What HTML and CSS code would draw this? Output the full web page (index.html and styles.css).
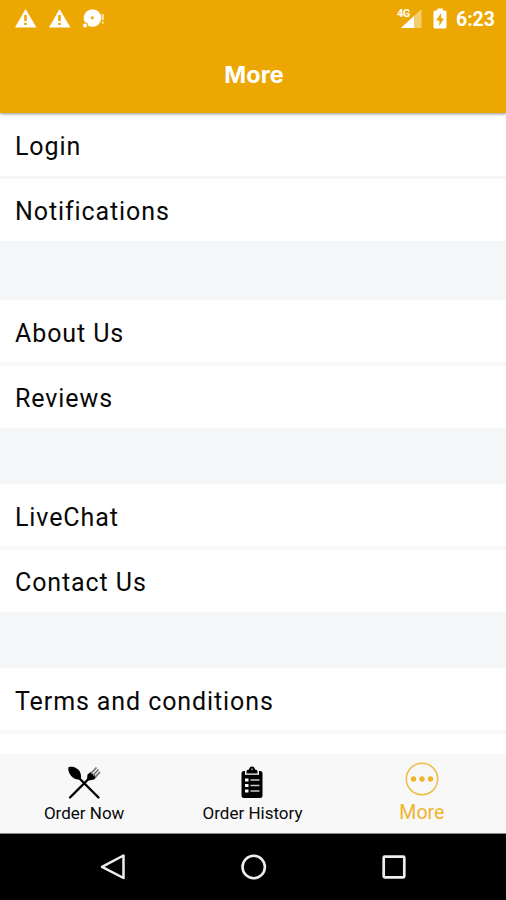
FILE: index.html
```html
<!DOCTYPE html>
<html lang="en">
<head>
    <meta charset="UTF-8">
    <meta name="viewport" content="width=device-width, initial-scale=1.0">
    <title>More</title>
    <link rel="stylesheet" href="styles.css">
</head>
<body>
    <header class="header">
        <div class="status-bar">
            <div class="status-left">
                <svg width="22" height="20" viewBox="0 0 22 20">
                    <path fill="#fff" fill-rule="evenodd" d="M10.500 0L21.500 18.500H0zM9.200 6v6h2.600v-6zM9.200 13.700v2.400h2.600v-2.400z"/>
                </svg>
                <svg width="22" height="20" viewBox="0 0 22 20">
                    <path fill="#fff" fill-rule="evenodd" d="M10.500 0L21.500 18.500H0zM9.200 6v6h2.600v-6zM9.200 13.700v2.400h2.600v-2.400z"/>
                </svg>
                <svg width="22" height="20" viewBox="0 0 22 20">
                    <circle cx="9.500" cy="9" r="8.800" fill="#fff"/>
                    <circle cx="9.300" cy="8.800" r="1.500" fill="#eca703"/>
                    <circle cx="2" cy="16.200" r="3" fill="#eca703"/>
                    <circle cx="2" cy="16.500" r="2" fill="#fff"/>
                    <path stroke="#fff" stroke-opacity=".7" stroke-width="2" d="M19.800 5v6M19.800 12.500v2"/>
                </svg>
            </div>
            <div class="status-right">
                <div class="signal">
                    <svg width="22" height="20" viewBox="0 0 22 20">
                        <path fill="#f4cd6c" d="M21.500 0V19H1z"/>
                        <path fill="#fff" d="M14 7V19H1z"/>
                    </svg>
                    <span class="network">4G</span>
                </div>
                <svg class="battery" width="14" height="21" viewBox="0 0 14 21">
                    <path fill="#fff" d="M4.300 0.500h5.400v2H12q1.500 0 1.500 1.500v15q0 1.500-1.500 1.500H2Q.5 20.500.500 19V4Q.5 2.500 2 2.500h2.300z"/>
                    <path fill="#eca703" d="M8.200 5L3 12.500h3.300V18L11 10.500H8.200z"/>
                </svg>
                <span class="time">6:23</span>
            </div>
        </div>
        <h1 class="title">More</h1>
    </header>

    <main class="menu">
        <div class="group first">
            <div class="item">Login</div>
            <div class="item">Notifications</div>
        </div>
        <div class="group">
            <div class="item">About Us</div>
            <div class="item">Reviews</div>
        </div>
        <div class="group">
            <div class="item">LiveChat</div>
            <div class="item">Contact Us</div>
        </div>
        <div class="group">
            <div class="item">Terms and conditions</div>
            <div class="item"></div>
        </div>
    </main>

    <nav class="tabs">
        <div class="tab">
            <svg width="34" height="34" viewBox="0 0 34 34">
                <path stroke="#000" stroke-width="2.400" stroke-linecap="round" d="M3 31.500L23.500 11M11 11L31.500 31.500"/>
                <path d="M1.500 1.200C5.500-.2 11 2 13 6C14.500 9.500 14.300 12 13 13C11 14.500 6.500 12.800 4 9.800C1.800 7 .8 3.500 1.500 1.200z"/>
                <path d="M20 13.500L20.500 8.500L23.500 6L29.500 11L27 13.500L22 14.500z"/>
                <path stroke="#777" stroke-width="1.800" d="M24 7.500L29.500 1.500M26 9.500L31.500 3.500M28 11.300L33 6"/>
            </svg>
            <span>Order Now</span>
        </div>
        <div class="tab">
            <svg width="22" height="34" viewBox="0 0 22 34">
                <path d="M3 5h16q2.500 0 2.500 2.500v22q0 2.500-2.500 2.500H3Q.5 32 .5 29.500v-22Q.5 5 3 5z"/>
                <path fill="#f8f8f8" d="M4 5h14v3.800H4z"/>
                <path d="M5.500 7.500V5.500Q5.500 3.500 8 3.500Q8.500 .5 11 .5T14 3.500Q16.500 3.500 16.500 5.500V7.500z"/>
                <circle cx="11" cy="3.300" r="1" fill="#888"/>
                <path fill="#f8f8f8" d="M4 12.500h3.500v3H4zM4 18h3.500v3H4zM4 23.500h3.500v3H4z"/>
                <path stroke="#ccc" stroke-width="1.700" d="M9.500 14h9M9.500 19.500h9M9.500 25h9"/>
            </svg>
            <span>Order History</span>
        </div>
        <div class="tab active">
            <svg width="34" height="34" viewBox="0 0 34 34">
                <circle cx="17" cy="17" r="15.700" fill="none" stroke="#edbd48" stroke-width="1.500"/>
                <g fill="#edb42c">
                    <circle cx="8.500" cy="17" r="2.700"/>
                    <circle cx="17" cy="17" r="2.700"/>
                    <circle cx="25.500" cy="17" r="2.700"/>
                </g>
            </svg>
            <span>More</span>
        </div>
    </nav>

    <footer class="android-nav">
        <svg width="28" height="28" viewBox="0 0 28 28">
            <path fill="none" stroke="#eee" stroke-width="2.500" stroke-linejoin="round" d="M24.500 2.500V25L3 13.800z"/>
        </svg>
        <svg width="28" height="28" viewBox="0 0 28 28">
            <circle cx="13.700" cy="14" r="11.200" fill="none" stroke="#eee" stroke-width="2.600"/>
        </svg>
        <svg width="28" height="28" viewBox="0 0 28 28">
            <rect x="3.700" y="3.700" width="20.600" height="20.600" rx="1" fill="none" stroke="#eee" stroke-width="2.700"/>
        </svg>
    </footer>
</body>
</html>
```
FILE: styles.css
```css
* {
    box-sizing: border-box;
}
body {
    margin: 0;
    height: 900px;
    display: flex;
    flex-direction: column;
    overflow: hidden;
    background-color: #fff;
    color: #080808;
    font-family: Roboto, sans-serif;
}
svg {
    display: block;
}

/* Header */
.header {
    position: relative;
    flex: none;
    height: 113px;
    background-color: #eca703;
    color: #fff;
    box-shadow: 0 1px 3px rgba(0, 0, 0, 0.45);
}
.status-bar {
    display: flex;
    justify-content: space-between;
    align-items: center;
    height: 37px;
    padding: 0 11px 0 15px;
}
.status-left {
    display: flex;
    gap: 12px;
}
.status-right {
    display: flex;
    align-items: center;
}
.signal {
    position: relative;
}
.network {
    position: absolute;
    left: -3px;
    top: -1px;
    font-size: 11px;
    font-weight: 700;
    line-height: 12px;
    letter-spacing: -0.5px;
}
.battery {
    margin: 0 9px 0 11px;
}
.time {
    padding-top: 2px;
    font-size: 19.5px;
    font-weight: 700;
    line-height: 35px;
}
.title {
    margin: 0;
    padding-left: 2px;
    text-align: center;
    font-family: Inter, sans-serif;
    font-size: 23.5px;
    font-weight: 700;
    line-height: 75px;
}

/* Menu list */
.menu {
    flex: none;
    height: 641px;
    overflow: hidden;
    background-color: #f4f6f8;
}
.group {
    margin-bottom: 56px;
    background-color: #fff;
}
.group.first {
    margin-bottom: 59px;
}
.item {
    height: 62px;
    padding-left: 15px;
    font-size: 25px;
    line-height: 65px;
    letter-spacing: 0.9px;
}
.item:first-child {
    height: 66px;
    border-bottom: 4px solid #f7f7f7;
    line-height: 67px;
}
.first .item:first-child {
    border-bottom-width: 3px;
}

/* Bottom tabs */
.tabs {
    display: flex;
    flex: none;
    height: 80px;
    background-color: #f8f8f8;
    border-bottom: 1px solid #888;
}
.tab {
    flex: 1;
    display: flex;
    flex-direction: column;
    align-items: center;
    padding-top: 12px;
    font-size: 17px;
    line-height: 26px;
}
.tab.active {
    padding-top: 8px;
    padding-left: 1px;
    color: #edb42c;
    font-size: 19.5px;
    line-height: 33px;
}

/* Android navigation */
.android-nav {
    display: flex;
    justify-content: space-between;
    align-items: center;
    flex: 1;
    padding: 0 98px 0 99px;
    background-color: #000;
}
```
